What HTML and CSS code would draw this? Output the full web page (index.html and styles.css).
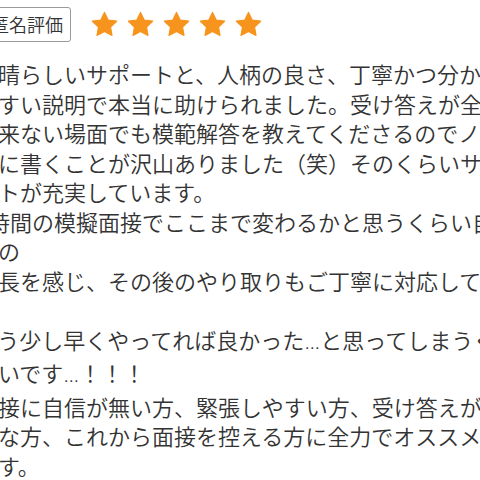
FILE: index.html
```html
<!DOCTYPE html>
<html lang="ja">
<head>
<meta charset="utf-8">
<title>レビュー</title>
<link rel="stylesheet" href="styles.css">
</head>
<body>
<div class="review">
  <div class="review-head">
    <span class="badge">匿名評価</span>
    <div class="stars" aria-label="5つ星">
      <svg class="star" viewBox="0 0 24 24"><polygon points="12,2 15.09,8.26 22,9.27 17,14.14 18.18,21.02 12,17.77 5.82,21.02 7,14.14 2,9.27 8.91,8.26"/></svg>
      <svg class="star" viewBox="0 0 24 24"><polygon points="12,2 15.09,8.26 22,9.27 17,14.14 18.18,21.02 12,17.77 5.82,21.02 7,14.14 2,9.27 8.91,8.26"/></svg>
      <svg class="star" viewBox="0 0 24 24"><polygon points="12,2 15.09,8.26 22,9.27 17,14.14 18.18,21.02 12,17.77 5.82,21.02 7,14.14 2,9.27 8.91,8.26"/></svg>
      <svg class="star" viewBox="0 0 24 24"><polygon points="12,2 15.09,8.26 22,9.27 17,14.14 18.18,21.02 12,17.77 5.82,21.02 7,14.14 2,9.27 8.91,8.26"/></svg>
      <svg class="star" viewBox="0 0 24 24"><polygon points="12,2 15.09,8.26 22,9.27 17,14.14 18.18,21.02 12,17.77 5.82,21.02 7,14.14 2,9.27 8.91,8.26"/></svg>
    </div>
  </div>
  <p class="review-text">素晴らしいサポートと、人柄の良さ、丁寧かつ分かり<br>やすい説明で本当に助けられました。受け答えが全く<br>出来ない場面でも模範解答を教えてくださるのでノー<br>トに書くことが沢山ありました（笑）そのくらいサポ<br>ートが充実しています。<br>1時間の模擬面接でここまで変わるかと思うくらい自<br>分の<br>成長を感じ、その後のやり取りもご丁寧に対応して頂<br><br>もう少し早くやってれば良かった<span class="ellipsis">…</span>と思ってしまうく<br>らいです<span class="ellipsis">…</span>！！！<br>面接に自信が無い方、緊張しやすい方、受け答えが苦<br>手な方、これから面接を控える方に全力でオススメし<br>ます。</p>
</div>
</body>
</html>
```

FILE: styles.css
```css
html, body {
  margin: 0;
  padding: 0;
  background: #ffffff;
}
body {
  width: 480px;
  height: 480px;
  overflow: hidden;
  font-family: "Noto Sans CJK JP", "Noto Sans", sans-serif;
  font-weight: 350;
  color: #333333;
}
.review {
  margin-left: -24px;
  padding-top: 7px;
}
.review-head {
  display: flex;
  align-items: center;
  gap: 19px;
  margin-left: 7px;
}
.badge {
  display: inline-block;
  box-sizing: border-box;
  height: 35px;
  line-height: 33px;
  padding: 0 7px;
  font-size: 18px;
  color: #333333;
  border: 1px solid #9a9a9a;
  border-radius: 3px;
}
.stars {
  display: flex;
  gap: 7px;
}
.star {
  width: 29px;
  height: 29px;
  fill: #f7941d;
  stroke: #f7941d;
  stroke-width: 1;
  stroke-linejoin: round;
}
.review-text {
  margin: 17px 0 0 0;
  font-size: 22px;
  line-height: 29.5px;
  white-space: nowrap;
}
.ellipsis {
  font-family: "Liberation Sans", sans-serif;
  font-size: 16px;
}
```
